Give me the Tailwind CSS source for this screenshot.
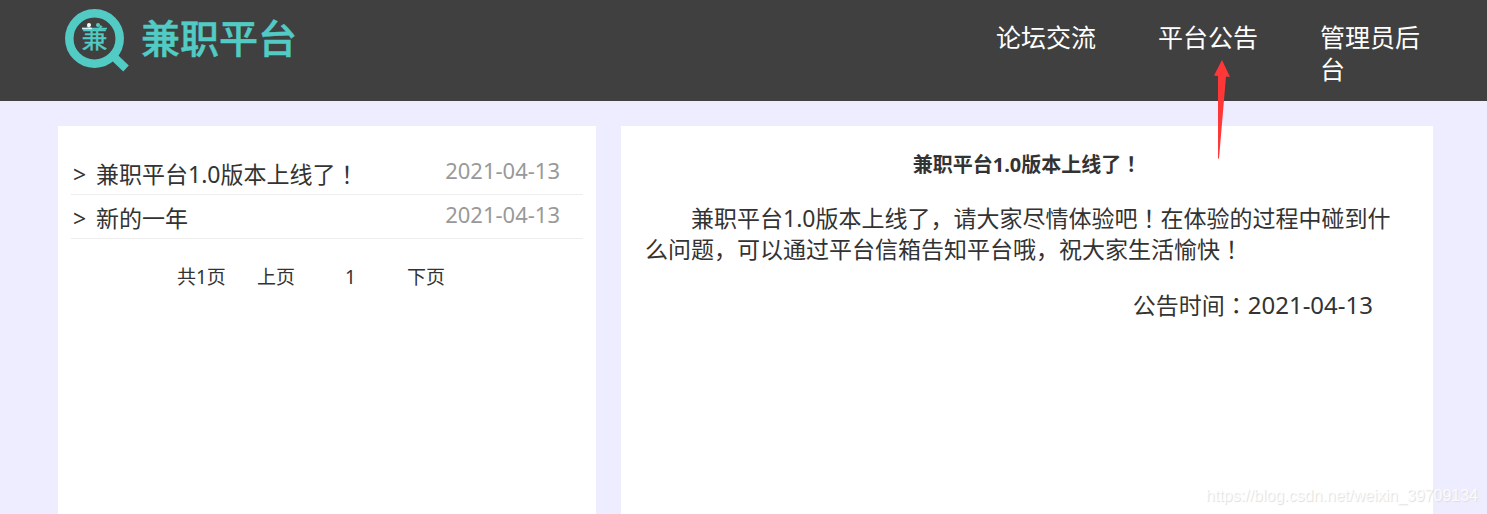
<!DOCTYPE html>
<html lang="zh-CN">
<head>
  <meta charset="UTF-8">
  <meta name="viewport" content="width=device-width, initial-scale=1.0">
  <title>兼职平台 - 平台公告</title>
  <script src="https://cdn.jsdelivr.net/npm/@tailwindcss/browser@4"></script>
</head>
<body class="relative flex min-h-screen flex-col bg-[#eeedff] font-['Noto_Sans','Noto_Sans_CJK_SC',sans-serif] text-[#333]">
  <header class="relative flex items-start justify-between bg-[#404040] pl-[65px] pr-[66px] pb-4">
    <a href="#" class="flex items-start gap-3 pt-2 text-[#52cbc5]">
      <svg class="h-16 w-16" viewBox="0 0 64 64" fill="none">
        <circle cx="29.5" cy="30.5" r="25.2" stroke="#52cbc5" stroke-width="8.5" />
        <path d="M48 48 L61 60.5" stroke="#52cbc5" stroke-width="8" />
        <text x="29.5" y="40" text-anchor="middle" font-size="26" fill="#52cbc5" stroke="#52cbc5" stroke-width="0.3">兼</text>
        <path d="M17 20.5 H42" stroke="#52cbc5" stroke-width="1.5" />
        <path d="M17 20.5 H27" stroke="#d5f3f1" stroke-width="1.5" />
        <circle cx="24" cy="17" r="2" fill="#fff" />
        <circle cx="33" cy="17" r="2" fill="#52cbc5" />
      </svg>
      <span class="text-[39px] leading-[60px] font-medium [-webkit-text-stroke:0.5px_#52cbc5]">兼职平台</span>
    </a>
    <nav class="flex gap-[61px] pt-[21px] text-[25px] leading-8 text-white">
      <a href="#" class="w-[101px]">论坛交流</a>
      <a href="#" class="w-[101px]">平台公告</a>
      <a href="#" class="w-[101px]">管理员后台</a>
    </nav>
    <!-- pointer to the notice link -->
    <svg class="absolute top-[60px] right-[256px] h-[99px] w-[18px]" viewBox="0 0 18 99" fill="#ff3737">
      <path d="M9 0 L17 17 L13 16.5 L6 98.5 H5 L5 16 L1 15.5 Z" />
    </svg>
  </header>

  <main class="grid grow grid-cols-[538fr_812fr] gap-[25px] pt-[25px] pr-[54px] pl-[58px]">
    <section class="bg-white px-[13px] pt-[25px]">
      <ul class="text-[23px]">
        <li class="flex h-11 items-start justify-between border-b border-[#eee] pr-[23px] pl-[2px]">
          <a href="#" class="flex leading-[46px]"><span class="w-[23px]">&gt;</span>兼职平台1.0版本上线了<span lang="zh-Hant" class="font-['Noto_Sans','Noto_Sans_CJK_TC',sans-serif]">！</span></a>
          <time class="text-[22px] leading-[38px] text-[#999]">2021-04-13</time>
        </li>
        <li class="flex h-11 items-start justify-between border-b border-[#eee] pr-[23px] pl-[2px]">
          <a href="#" class="flex leading-[46px]"><span class="w-[23px]">&gt;</span>新的一年</a>
          <time class="text-[22px] leading-[38px] text-[#999]">2021-04-13</time>
        </li>
      </ul>
      <div class="flex pt-6 pl-[106px] text-[19px] leading-7">
        <span class="w-20">共1页</span>
        <a href="#" class="w-[88px]">上页</a>
        <span class="w-[62px]">1</span>
        <a href="#">下页</a>
      </div>
    </section>

    <article class="bg-white px-6 pt-[23px] text-[23px] leading-[31px]">
      <h1 class="text-center text-[20px] font-bold">兼职平台1.0版本上线了<span lang="zh-Hant" class="font-['Noto_Sans','Noto_Sans_CJK_TC',sans-serif]">！</span></h1>
      <p class="pt-[23px] indent-[2em]">兼职平台1.0版本上线了，请大家尽情体验吧<span lang="zh-Hant" class="font-['Noto_Sans','Noto_Sans_CJK_TC',sans-serif]">！</span>在体验的过程中碰到什么问题，可以通过平台信箱告知平台哦，祝大家生活愉快<span lang="zh-Hant" class="font-['Noto_Sans','Noto_Sans_CJK_TC',sans-serif]">！</span></p>
      <p class="pt-6 pr-9 text-right">公告时间<span lang="zh-Hant" class="font-['Noto_Sans','Noto_Sans_CJK_TC',sans-serif]">：</span><time class="text-[24px]">2021-04-13</time></p>
    </article>
  </main>

  <div class="absolute right-[9px] bottom-2 font-['Liberation_Sans',sans-serif] text-[16px] leading-5 text-white/80 [text-shadow:1px_1px_1px_#ddd]">https://blog.csdn.net/weixin_39709134</div>
</body>
</html>
